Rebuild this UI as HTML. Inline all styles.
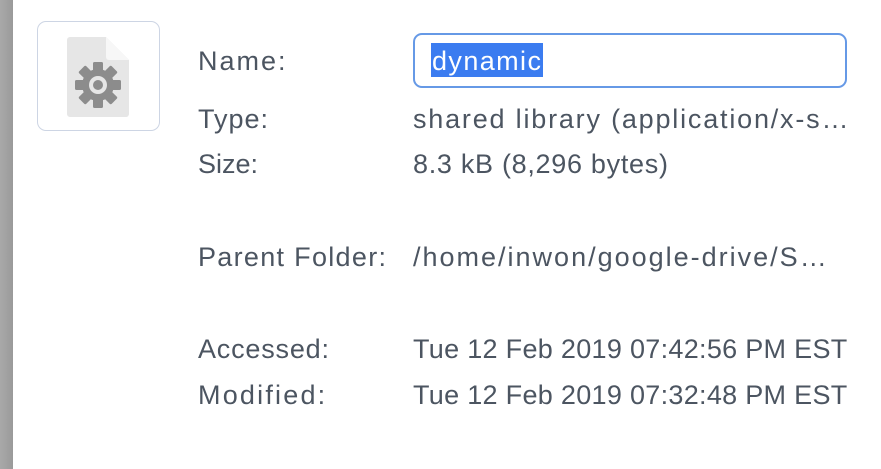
<!DOCTYPE html>
<html><head><meta charset="utf-8"><style>
html,body{margin:0;padding:0;width:881px;height:469px;overflow:hidden;background:#fff;}
body{position:relative;font-family:"Liberation Sans",sans-serif;font-size:27px;color:#4c5561;}
.strip{position:absolute;left:0;top:0;width:13px;height:469px;background:linear-gradient(90deg,#a9a9a9,#9a9a9a);}
.box{position:absolute;left:37px;top:21px;width:121px;height:108px;border:1.5px solid #cdd5e4;border-radius:9px;}
.t{position:absolute;line-height:27px;white-space:nowrap;}
.in{position:absolute;left:413px;top:33px;width:430px;height:51px;border:2px solid #6699e6;border-radius:9px;}
.sel{position:absolute;left:431px;top:43px;width:112px;height:34px;background:#3b7cf0;}
</style></head><body>
<div class="strip"></div>
<div class="box"></div>
<svg style="position:absolute;left:0;top:0" width="200" height="150">
<path d="M69 37 H106 L129 60 V114 a3 3 0 0 1 -3 3 H70 a3 3 0 0 1 -3 -3 V40 a3 3 0 0 1 3 -3z" fill="#e6e6e6"/>
<path d="M106 37 L129 60 H109 a3 3 0 0 1 -3 -3z" fill="#f7f7f7"/>
<g transform="translate(98 85)" fill="#8c8c8c">
<circle r="16"/>
<g id="tt"><rect x="-5" y="-23" width="10" height="10" rx="1.5"/></g>
<use href="#tt" transform="rotate(45)"/><use href="#tt" transform="rotate(90)"/><use href="#tt" transform="rotate(135)"/>
<use href="#tt" transform="rotate(180)"/><use href="#tt" transform="rotate(225)"/><use href="#tt" transform="rotate(270)"/><use href="#tt" transform="rotate(315)"/>
<circle r="9" fill="#e6e6e6"/><circle r="5"/>
</g>
</svg>
<div class="in"></div>
<div class="sel"></div>
<div class="t" style="left:198px;top:48px;letter-spacing:2px">Name:</div>
<div class="t" style="left:432px;top:48px;color:#fff;letter-spacing:1.4px">dynamic</div>
<div class="t" style="left:198px;top:106px;letter-spacing:1px">Type:</div>
<div class="t" style="left:413px;top:106px;letter-spacing:1.8px">shared library (application/x-s…</div>
<div class="t" style="left:198px;top:151px">Size:</div>
<div class="t" style="left:413px;top:151px;letter-spacing:0.7px">8.3 kB (8,296 bytes)</div>
<div class="t" style="left:198px;top:244px;letter-spacing:1.3px">Parent Folder:</div>
<div class="t" style="left:413px;top:244px;letter-spacing:2px">/home/inwon/google-drive/S…</div>
<div class="t" style="left:198px;top:336px;letter-spacing:0.8px">Accessed:</div>
<div class="t" style="left:413px;top:336px;letter-spacing:0.3px">Tue 12 Feb 2019 07:42:56 PM EST</div>
<div class="t" style="left:198px;top:382px;letter-spacing:2.2px">Modified:</div>
<div class="t" style="left:413px;top:382px;letter-spacing:0.3px">Tue 12 Feb 2019 07:32:48 PM EST</div>
</body></html>
